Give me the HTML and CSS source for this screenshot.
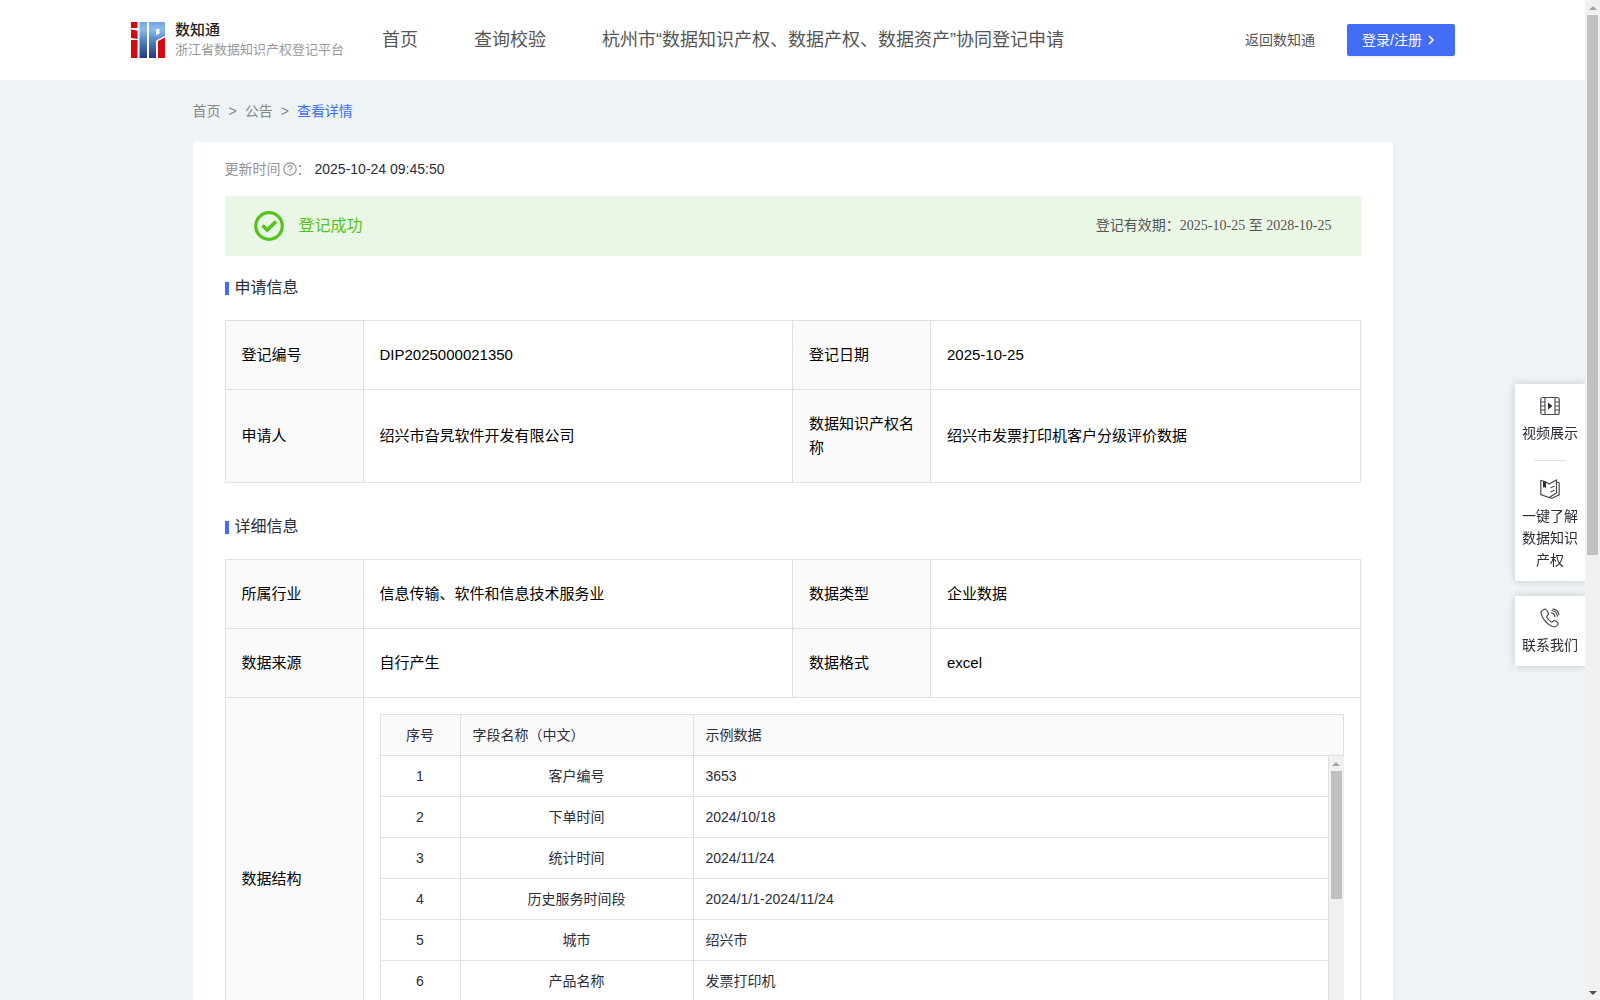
FILE: index.html
```html
<!DOCTYPE html>
<html lang="zh-CN">
  <head>
    <meta charset="UTF-8" />
    <meta name="viewport" content="width=device-width, initial-scale=1.0" />
    <title>数知通 - 浙江省数据知识产权登记平台</title>
    <link rel="stylesheet" href="styles.css">
  </head>
  <body>
    <header class="header">
      <a class="logo" href="#">
        <svg class="logo-icon" width="34" height="36" viewBox="0 0 34 36" aria-hidden="true">
          <defs>
            <linearGradient id="blue" gradientUnits="userSpaceOnUse" x1="0" y1="0" x2="0" y2="36">
              <stop offset="0" stop-color="#6fa6e0" />
              <stop offset="0.2" stop-color="#8cbcec" />
              <stop offset="0.5" stop-color="#5486c8" />
              <stop offset="1" stop-color="#27367f" />
            </linearGradient>
          </defs>
          <path fill="#d20a10" d="M0 0h6.500v6H0zM0 7.500l6.500 1v8.500L0 16zM0 18h6.500v18H0zM27 19l7-3.500V36h-7z" />
          <path fill="url(#blue)" d="M8.500 0h7.500v36H8.500z" />
          <path fill="url(#blue)" fill-rule="evenodd" d="M18 0h16v14l-9 4.500V36h-7zM25 7v6.500l3.500-2V7z" />
        </svg>
        <span class="logo-text">
          <strong>数知通</strong>
          <span>浙江省数据知识产权登记平台</span>
        </span>
      </a>
      <nav class="nav">
        <a href="#">首页</a>
        <a href="#">查询校验</a>
        <a href="#">杭州市“数据知识产权、数据产权、数据资产”协同登记申请</a>
      </nav>
      <a class="back" href="#">返回数知通</a>
      <button class="login" type="button">
        登录/注册
        <svg width="8" height="12" viewBox="0 0 8 12" fill="none" stroke="#fff" stroke-width="1.500" aria-hidden="true"><path d="M2 2l4 4-4 4" /></svg>
      </button>
    </header>

    <main class="container">
      <nav class="breadcrumb">
        <a href="#">首页</a>
        <span>&gt;</span>
        <a href="#">公告</a>
        <span>&gt;</span>
        <a class="current" href="#">查看详情</a>
      </nav>

      <div class="card">
        <div class="update">
          <span class="update-label">更新时间<svg width="14" height="14" viewBox="0 0 14 14" fill="none" stroke="#909399" stroke-width="1.200" aria-hidden="true"><circle cx="7" cy="7" r="6.200" /><path d="M5 5.600a2 2 0 1 1 2.800 1.800q-.8.300-.8 1.100M7 9.400v1.200" /></svg>：</span>
          <span>2025-10-24 09:45:50</span>
        </div>

        <div class="banner">
          <svg width="30" height="30" viewBox="0 0 30 30" fill="none" stroke="#52c41a" aria-hidden="true"><circle cx="15" cy="15" r="13.300" stroke-width="3.200" /><path d="M8.500 14.500l4.700 4.500 8.800-8.500" stroke-width="3.600" /></svg>
          <span class="banner-status">登记成功</span>
          <span class="banner-date">登记有效期：2025-10-25 至 2028-10-25</span>
        </div>

        <h2 class="title">申请信息</h2>
        <table class="info">
          <colgroup>
            <col class="col-label"><col><col class="col-label"><col>
          </colgroup>
          <tr>
            <th scope="row">登记编号</th>
            <td>DIP2025000021350</td>
            <th scope="row">登记日期</th>
            <td>2025-10-25</td>
          </tr>
          <tr>
            <th scope="row">申请人</th>
            <td>绍兴市旮旯软件开发有限公司</td>
            <th scope="row">数据知识产权名称</th>
            <td>绍兴市发票打印机客户分级评价数据</td>
          </tr>
        </table>

        <h2 class="title">详细信息</h2>
        <table class="info">
          <colgroup>
            <col class="col-label"><col><col class="col-label"><col>
          </colgroup>
          <tr>
            <th scope="row">所属行业</th>
            <td>信息传输、软件和信息技术服务业</td>
            <th scope="row">数据类型</th>
            <td>企业数据</td>
          </tr>
          <tr>
            <th scope="row">数据来源</th>
            <td>自行产生</td>
            <th scope="row">数据格式</th>
            <td>excel</td>
          </tr>
          <tr>
            <th scope="row">数据结构</th>
            <td class="nested" colspan="3">
              <div class="fields-scroll">
                <table class="fields">
                  <colgroup>
                    <col class="col-index"><col class="col-name"><col>
                  </colgroup>
                  <thead>
                    <tr><th>序号</th><th>字段名称（中文）</th><th>示例数据</th></tr>
                  </thead>
                  <tbody>
                    <tr><td>1</td><td>客户编号</td><td>3653</td></tr>
                    <tr><td>2</td><td>下单时间</td><td>2024/10/18</td></tr>
                    <tr><td>3</td><td>统计时间</td><td>2024/11/24</td></tr>
                    <tr><td>4</td><td>历史服务时间段</td><td>2024/1/1-2024/11/24</td></tr>
                    <tr><td>5</td><td>城市</td><td>绍兴市</td></tr>
                    <tr><td>6</td><td>产品名称</td><td>发票打印机</td></tr>
                  </tbody>
                </table>
                <div class="scrollbar fields-scrollbar" aria-hidden="true">
                  <span class="arrow-up"></span>
                  <span class="thumb"></span>
                </div>
              </div>
            </td>
          </tr>
        </table>
      </div>
    </main>

    <aside class="side">
      <div class="side-box">
        <a href="#">
          <svg width="20" height="20" viewBox="0 0 20 20" fill="none" stroke="#4a4d57" stroke-width="1.200" aria-hidden="true"><rect x=".8" y="1.500" width="18.400" height="17" rx="2" /><path d="M5 1.500v17M15 1.500v17M1 6h4M1 10h4M1 14h4M15 6h4M15 10h4M15 14h4" /><path d="M8 6.500v7l4.500-3.500z" fill="#2b2d38" stroke="none" /></svg>
          视频展示
        </a>
        <a href="#">
          <svg width="20" height="20" viewBox="0 0 20 20" fill="none" stroke="#4a4d57" stroke-width="1.200" aria-hidden="true"><path d="M6 3l3 2 7.500-4v13L9 18.500.8 15.500V1.500L3 2M17 3l2.200.8v12L12 19.200 9 18.500M10.500 9l4-2M10.500 13l4-2" /><path d="M3 1.500l3 1v7L4.500 8 3 8.500z" fill="#2b2d38" stroke="none" /></svg>
          一键了解数据知识产权
        </a>
      </div>
      <div class="side-box">
        <a href="#">
          <svg width="20" height="20" viewBox="0 0 20 20" fill="none" stroke="#4a4d57" stroke-width="1.200" aria-hidden="true"><path d="M3.500 1.500Q5.500.5 7 2.500l1.200 2.200q.8 1.500-.6 2.600-1.300 1-.6 2.200 1.600 2.700 4 4.300 1 .6 2-.5 1.200-1.300 2.600-.4l1.800 1.300q1.500 1.200.3 2.800-2 2.600-5.200 1.500-4.500-1.500-8-6.300Q1 7.500 1 4.500q.5-2.200 2.500-3z" /><path d="M11 4.800q3.500.2 4 4.200M11.500 2.500q5.300.2 6 6.200M12.500.8q5.800.7 6.500 6.400" /></svg>
          联系我们
        </a>
      </div>
    </aside>

    <div class="scrollbar page-scrollbar" aria-hidden="true">
      <span class="arrow-up"></span>
      <span class="thumb"></span>
      <span class="arrow-down"></span>
    </div>
  </body>
</html>
```
FILE: styles.css
```css
* {
  box-sizing: border-box;
}

html,
body {
  height: 100%;
}

body {
  margin: 0;
  padding-right: 15px;
  overflow: hidden;
  background-color: #eef3f6;
  color: #2b2d38;
  font-family: "Liberation Sans", "Noto Sans CJK SC", sans-serif;
  font-size: 14px;
  line-height: 22px;
}

a {
  color: inherit;
  text-decoration: none;
}

svg {
  flex: none;
}

/* Header */
.header {
  display: flex;
  align-items: center;
  height: 80px;
  padding: 0 130px;
  background-color: #fff;
  color: #555;
  white-space: nowrap;
}

.logo {
  display: flex;
  align-items: center;
  gap: 10px;
  width: 252px;
  padding-left: 1px;
}

.logo-text {
  display: flex;
  flex-direction: column;
  color: #999;
  font-size: 13px;
  line-height: 20px;
}

.logo-text strong {
  color: #222;
  font-size: 15px;
  font-weight: 500;
}

.nav {
  display: flex;
  flex: 1;
  gap: 56px;
  font-size: 18px;
}

.login {
  display: flex;
  align-items: center;
  gap: 5px;
  height: 32px;
  margin-left: 32px;
  padding: 0 20px 0 15px;
  border: 0;
  border-radius: 2px;
  background-color: #446df6;
  box-shadow: 0 2px 0 rgba(0, 0, 0, 0.04);
  color: #fff;
  font: inherit;
}

/* Page content */
.container {
  max-width: 1200px;
  margin: 0 auto;
}

.breadcrumb {
  display: flex;
  gap: 8px;
  padding: 20px 0;
  color: #888;
}

.breadcrumb .current {
  color: #3f6cf5;
}

.card {
  padding: 16px 32px;
  border-radius: 4px;
  background-color: #fff;
}

.update {
  display: flex;
  gap: 4px;
}

.update-label {
  display: flex;
  align-items: center;
  color: #909399;
}

.update-label svg {
  margin-left: 2px;
}

.banner {
  display: flex;
  align-items: center;
  height: 60px;
  margin-top: 16px;
  padding: 0 29px;
  background-color: #ebf7e6;
}

.banner-status {
  flex: 1;
  margin-left: 15px;
  color: #52c41a;
  font-size: 16px;
}

.banner-date {
  color: #555;
  font-family: "Liberation Serif", "Noto Sans CJK SC", serif;
}

.title {
  display: flex;
  align-items: center;
  gap: 6px;
  margin: 20px 0;
  font-size: 16px;
  font-weight: 400;
  line-height: 24px;
}

.title::before {
  content: "";
  width: 4px;
  height: 13px;
  background-color: #446df6;
}

/* Info tables */
.info,
.fields {
  width: 100%;
  border-collapse: collapse;
  table-layout: fixed;
}

.info {
  margin-bottom: 32px;
  color: #000;
  font-size: 15px;
  line-height: 24px;
}

.info th,
.info td {
  padding: 22px 16px;
  border: 1px solid #e0e0e0;
  font-weight: 400;
  text-align: left;
}

.info th {
  background-color: #fafafa;
}

.col-label {
  width: 138px;
}

.info .nested {
  padding: 16px;
}

.fields-scroll {
  display: grid;
  grid-template-columns: 1fr 15px;
  align-items: start;
  height: 329px;
  overflow: hidden;
}

.fields {
  grid-area: 1 / 1 / 2 / 3;
  color: #2b2d38;
  font-size: 14px;
  line-height: 22px;
}

.info .fields th,
.info .fields td {
  padding: 9px 12px;
}

.info .fields th:first-child,
.info .fields td:first-child,
.info .fields td:nth-child(2) {
  text-align: center;
}

.col-index {
  width: 80px;
}

.col-name {
  width: 233px;
}

/* Scrollbars */
.scrollbar {
  display: flex;
  flex-direction: column;
  align-items: center;
  width: 15px;
  background-color: #f1f1f1;
}

.arrow-up,
.arrow-down {
  margin: 6px 0 5px;
  border: 4px solid transparent;
  border-top: 0;
  border-bottom-color: #a3a3a3;
}

.arrow-down {
  margin-top: auto;
  border-top: 4px solid #505050;
  border-bottom: 0;
}

.thumb {
  width: 11px;
  height: 128px;
  background-color: #c1c1c1;
}

.fields-scrollbar {
  grid-area: 1 / 2;
  width: 16px;
  height: 288px;
  margin: 42px 0 0 -1px;
  border-left: 1px solid #e0e0e0;
}

.page-scrollbar {
  position: fixed;
  top: 0;
  right: 0;
  bottom: 0;
}

.page-scrollbar .thumb {
  height: 54%;
}

/* Floating side menu */
.side {
  position: fixed;
  top: 384px;
  right: 15px;
  display: flex;
  flex-direction: column;
  gap: 15px;
  width: 70px;
}

.side-box {
  padding: 12px 7px 10px;
  background-color: #fff;
  box-shadow: 0 0 8px rgba(0, 0, 0, 0.18);
  text-align: center;
}

.side-box a {
  display: flex;
  flex-direction: column;
  align-items: center;
  gap: 6px;
}

.side-box a + a::before {
  content: "";
  width: 32px;
  height: 1px;
  margin: 16px 0 12px;
  background-color: #e0e0e0;
}
```
